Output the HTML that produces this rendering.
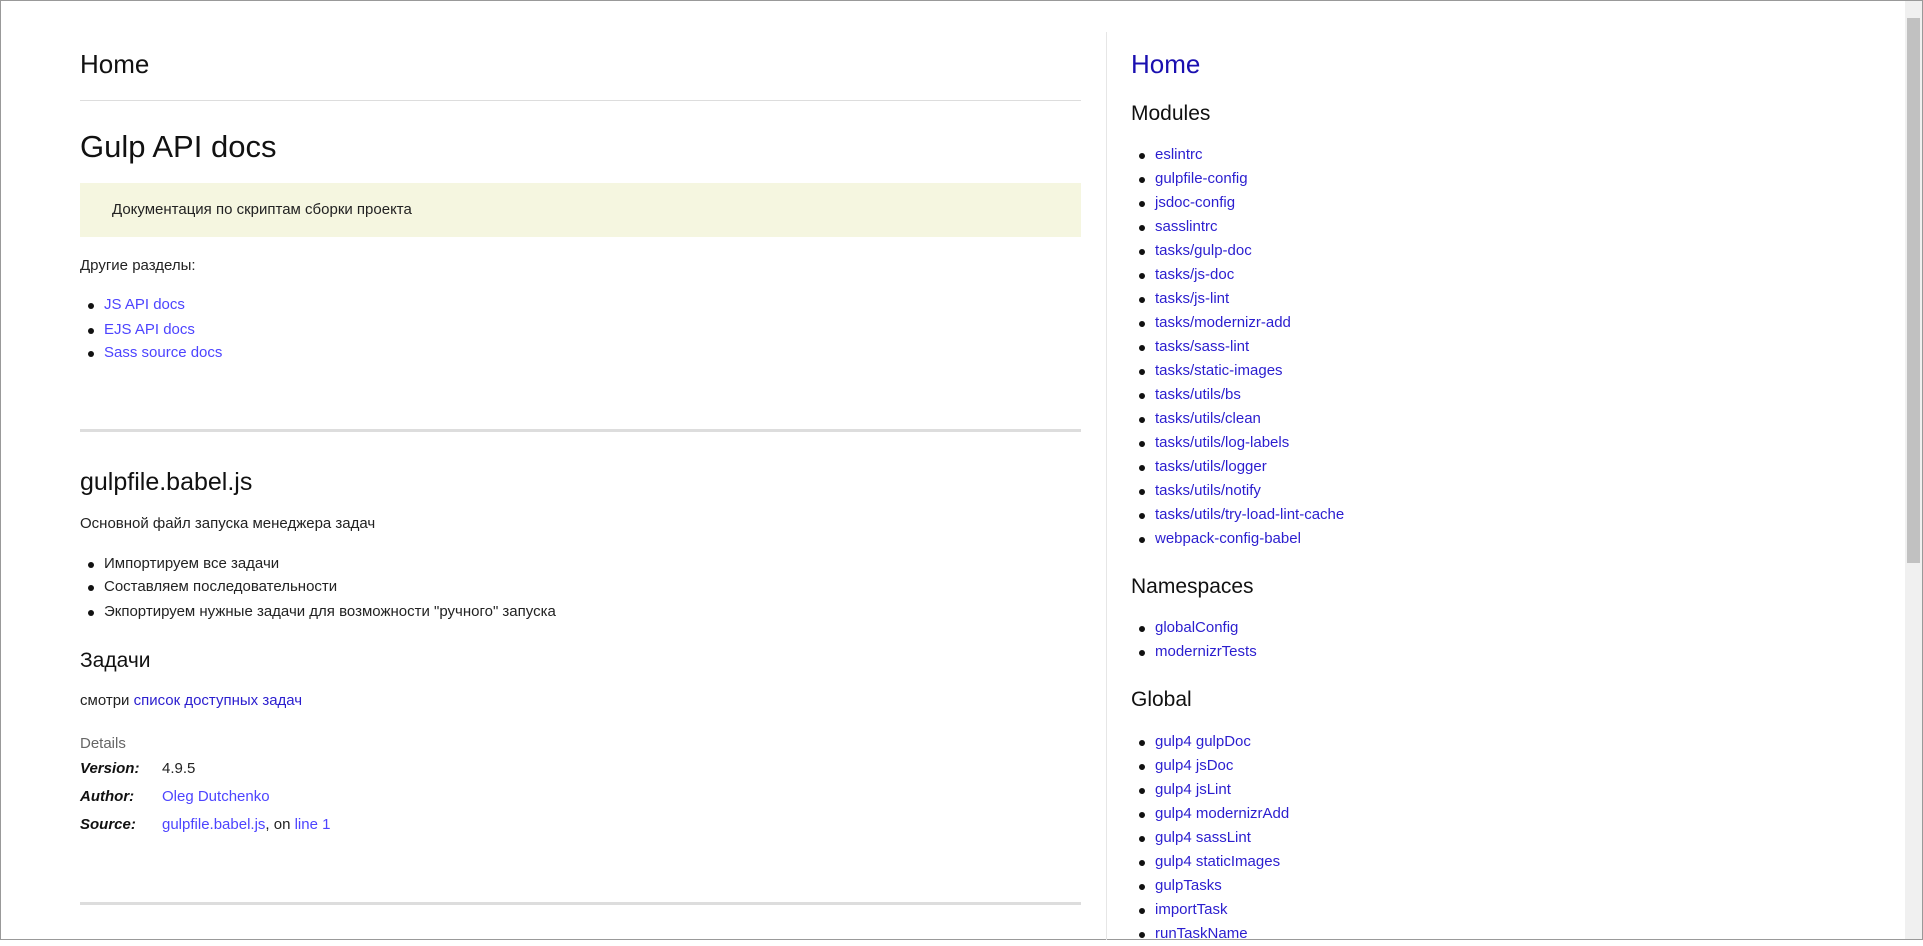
<!DOCTYPE html>
<html><head><meta charset="utf-8"><style>
body{margin:0;width:1923px;height:940px;overflow:hidden;background:#fff;font-family:"Liberation Sans","DejaVu Sans",sans-serif;color:#222;font-size:15px;position:relative}
.frame{position:absolute;left:0;top:0;width:1921px;height:938px;border:1px solid #999}
.a{position:absolute;white-space:nowrap;line-height:24px}
.l{color:#4d44ff}
.r{color:#2b1ecf}
.b::before{content:"";position:absolute;left:-16px;top:10px;width:6px;height:6px;border-radius:50%;background:#111}
h{font-weight:normal}
.hr{position:absolute;left:80px;width:1001px;background:#ddd}
</style></head><body>
<div class="frame"></div>
<div class="a" style="left:80px;top:48px;font-size:26px;line-height:32px;color:#111">Home</div>
<div class="hr" style="top:100px;height:1px"></div>
<div class="a" style="left:80px;top:128px;font-size:31px;line-height:38px;color:#111">Gulp API docs</div>
<div style="position:absolute;left:80px;top:183px;width:1001px;height:54px;background:#f5f6e0"></div>
<div class="a" style="left:112px;top:198px">Документация по скриптам сборки проекта</div>
<div class="a" style="left:80px;top:254px">Другие разделы:</div>
<div class="a b l" style="left:104px;top:293px">JS API docs</div>
<div class="a b l" style="left:104px;top:318px">EJS API docs</div>
<div class="a b l" style="left:104px;top:341px">Sass source docs</div>
<div class="hr" style="top:429px;height:3px"></div>
<div class="a" style="left:80px;top:466px;font-size:25px;line-height:32px;color:#111">gulpfile.babel.js</div>
<div class="a" style="left:80px;top:512px">Основной файл запуска менеджера задач</div>
<div class="a b" style="left:104px;top:552px">Импортируем все задачи</div>
<div class="a b" style="left:104px;top:575px">Составляем последовательности</div>
<div class="a b" style="left:104px;top:600px">Экпортируем нужные задачи для возможности "ручного" запуска</div>
<div class="a" style="left:80px;top:647px;font-size:21px;line-height:28px;color:#111">Задачи</div>
<div class="a" style="left:80px;top:689px">смотри <span class="r">список доступных задач</span></div>
<div class="a" style="left:80px;top:732px;color:#666">Details</div>
<div class="a" style="left:80px;top:757px;font-weight:bold;font-style:italic;color:#111">Version:</div>
<div class="a" style="left:162px;top:757px">4.9.5</div>
<div class="a" style="left:80px;top:785px;font-weight:bold;font-style:italic;color:#111">Author:</div>
<div class="a l" style="left:162px;top:785px">Oleg Dutchenko</div>
<div class="a" style="left:80px;top:813px;font-weight:bold;font-style:italic;color:#111">Source:</div>
<div class="a" style="left:162px;top:813px"><span class="l">gulpfile.babel.js</span>, on <span class="l">line 1</span></div>
<div class="hr" style="top:902px;height:3px"></div>

<div style="position:absolute;left:1106px;top:32px;width:1px;height:908px;background:#e6e6e6"></div>
<div class="a" style="left:1131px;top:48px;font-size:26px;line-height:32px;color:#1a0fb0">Home</div>
<div class="a" style="left:1131px;top:100px;font-size:21px;line-height:28px;color:#111">Modules</div>
<div style="position:absolute;left:1155px;top:143px">
<div class="a b r" style="position:relative">eslintrc</div>
<div class="a b r" style="position:relative">gulpfile-config</div>
<div class="a b r" style="position:relative">jsdoc-config</div>
<div class="a b r" style="position:relative">sasslintrc</div>
<div class="a b r" style="position:relative">tasks/gulp-doc</div>
<div class="a b r" style="position:relative">tasks/js-doc</div>
<div class="a b r" style="position:relative">tasks/js-lint</div>
<div class="a b r" style="position:relative">tasks/modernizr-add</div>
<div class="a b r" style="position:relative">tasks/sass-lint</div>
<div class="a b r" style="position:relative">tasks/static-images</div>
<div class="a b r" style="position:relative">tasks/utils/bs</div>
<div class="a b r" style="position:relative">tasks/utils/clean</div>
<div class="a b r" style="position:relative">tasks/utils/log-labels</div>
<div class="a b r" style="position:relative">tasks/utils/logger</div>
<div class="a b r" style="position:relative">tasks/utils/notify</div>
<div class="a b r" style="position:relative">tasks/utils/try-load-lint-cache</div>
<div class="a b r" style="position:relative">webpack-config-babel</div>
</div>
<div class="a" style="left:1131px;top:573px;font-size:21px;line-height:28px;color:#111">Namespaces</div>
<div class="a b r" style="left:1155px;top:616px">globalConfig</div>
<div class="a b r" style="left:1155px;top:640px">modernizrTests</div>
<div class="a" style="left:1131px;top:686px;font-size:21px;line-height:28px;color:#111">Global</div>
<div style="position:absolute;left:1155px;top:730px">
<div class="a b r" style="position:relative">gulp4 gulpDoc</div>
<div class="a b r" style="position:relative">gulp4 jsDoc</div>
<div class="a b r" style="position:relative">gulp4 jsLint</div>
<div class="a b r" style="position:relative">gulp4 modernizrAdd</div>
<div class="a b r" style="position:relative">gulp4 sassLint</div>
<div class="a b r" style="position:relative">gulp4 staticImages</div>
<div class="a b r" style="position:relative">gulpTasks</div>
<div class="a b r" style="position:relative">importTask</div>
<div class="a b r" style="position:relative">runTaskName</div>
</div>
<div style="position:absolute;left:1905px;top:1px;width:17px;height:938px;background:#f0f0f0"></div>
<div style="position:absolute;left:1907px;top:18px;width:13px;height:545px;background:#c1c1c1"></div>
</body></html>
